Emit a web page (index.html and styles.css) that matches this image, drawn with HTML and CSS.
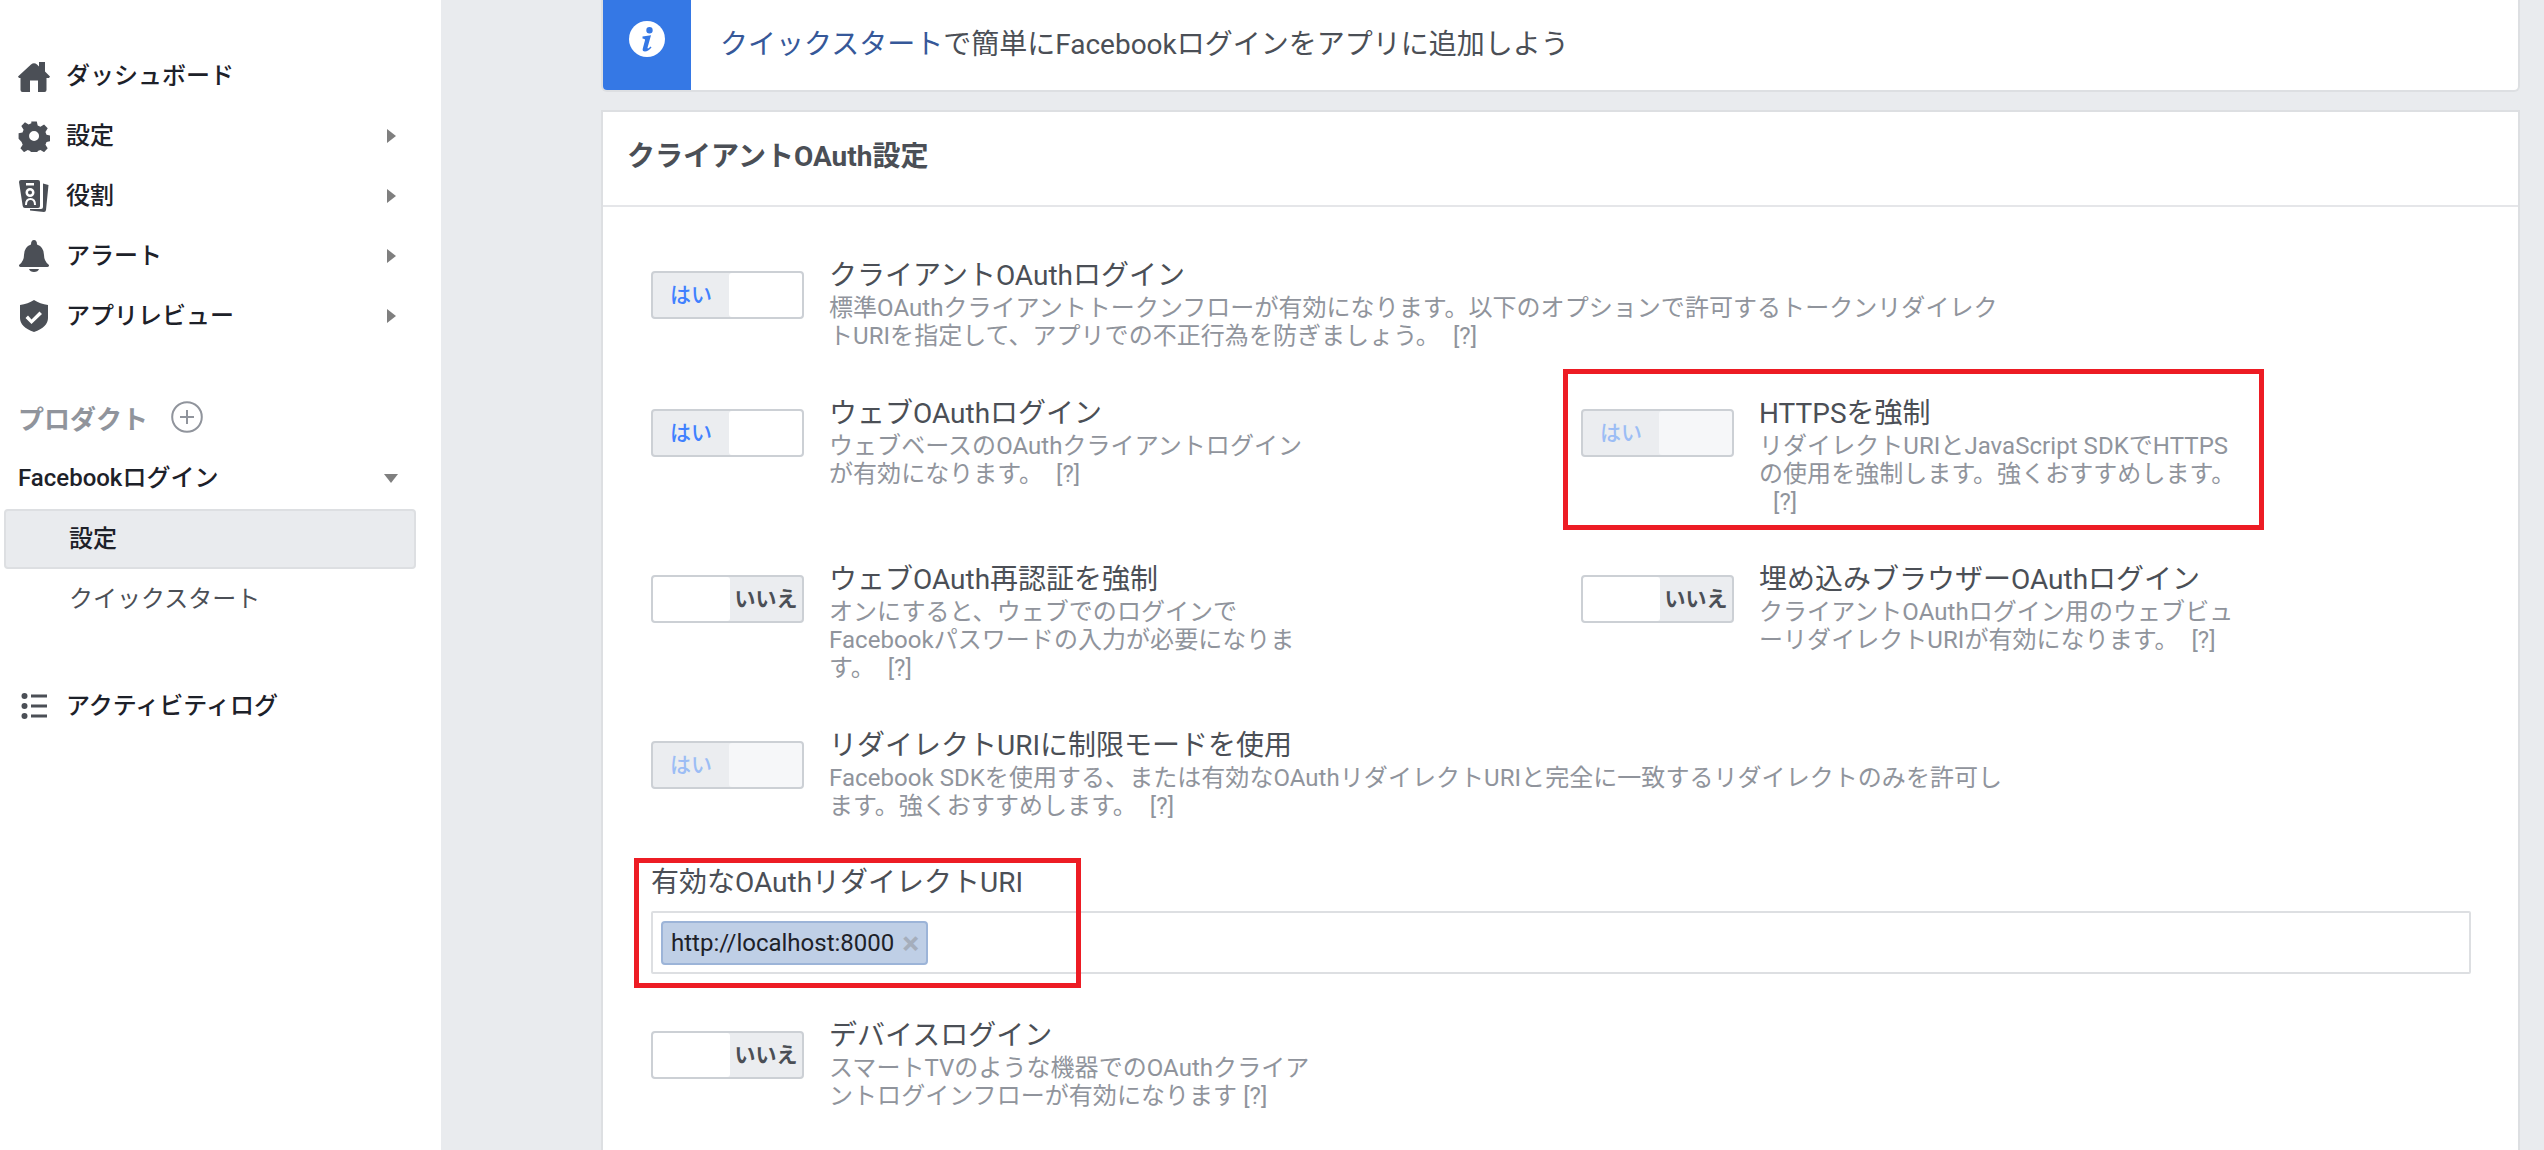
FILE: index.html
```html
<!DOCTYPE html>
<html lang="ja">
<head>
    <meta charset="UTF-8">
    <meta name="viewport" content="width=device-width, initial-scale=1.0">
    <title>クライアントOAuth設定</title>
    <link rel="stylesheet" href="styles.css">
</head>
<body>
    <div class="page">
        <!-- サイドバー -->
        <nav class="sidebar">
            <div class="nav-row">
                <svg class="nav-icon" viewBox="0 0 32 32"><path d="M0 16.500 13 4.500q3-2.500 6 0L21 6.500V2h6v9.500l5 5-1 1.500h-2.500V30q0 2-2 2H20V20.500h-8V32H4.500q-2 0-2-2V18H1z"/></svg>
                <span class="nav-label">ダッシュボード</span>
            </div>
            <div class="nav-row">
                <svg class="nav-icon" viewBox="0 0 32 32"><path fill-rule="evenodd" d="M13 0h6l1 4.500 3 1.300 4-2.500 4 4.200-2.500 4 1.200 3 4.300 1v6l-4.300 1-1.200 3 2.500 4-4 4.200-4-2.500-3 1.300-1 4.500h-6l-1-4.500-3-1.300-4 2.500-4-4.200 2.500-4-1.200-3L-1 19v-6l4.300-1 1.200-3-2.500-4 4-4.200 4 2.500 3-1.300zM16 10.500a5.500 5.500 0 1 0 0 11 5.500 5.500 0 0 0 0-11z" transform="translate(1.500 1.500) scale(.91)"/></svg>
                <span class="nav-label">設定</span>
                <span class="arrow-right"></span>
            </div>
            <div class="nav-row">
                <svg class="nav-icon" viewBox="0 0 32 32"><path fill-rule="evenodd" d="M3 0h17q2 0 2 2v24q0 2-2 2H7q-2 0-2.300-2L1 2q0-2 2-2zM8 3v2.500h8V3zM12 8a4.500 4.500 0 1 0 0 9 4.500 4.500 0 0 0 0-9zm0 2.500a2 2 0 1 1 0 4 2 2 0 0 1 0-4zM7 25h2q0-5 3.500-5t3.500 5h2q0-7-5.500-7T7 25z"/><path d="M25 3.500 30.500 5 28 30q-.2 2-2 2l-14-1.500V29h11q2 0 2-2z"/></svg>
                <span class="nav-label">役割</span>
                <span class="arrow-right"></span>
            </div>
            <div class="nav-row">
                <svg class="nav-icon" viewBox="0 0 32 32"><path d="M13 4.500Q13 0 16 0t3 4.500Q26 7 26 15q0 6 4.500 9.500 1.500 2-1 2.500h-27q-2.500-.5-1-2.500Q6 21 6 15q0-8 7-10.500zM11 29h10q-1 3-5 3t-5-3z"/></svg>
                <span class="nav-label">アラート</span>
                <span class="arrow-right"></span>
            </div>
            <div class="nav-row">
                <svg class="nav-icon" viewBox="0 0 32 32"><path fill-rule="evenodd" d="M16 0q6 4 14 5v13q0 9-14 14Q2 27 2 18V5q8-1 14-5zM10 15.500l-2.500 2.500 6 6L24 14l-2.500-2.500-8 8z"/></svg>
                <span class="nav-label">アプリレビュー</span>
                <span class="arrow-right"></span>
            </div>

            <div class="products-head">
                <span>プロダクト</span>
                <svg class="plus-icon" viewBox="0 0 32 32"><circle cx="16" cy="16" r="14.800"/><path d="M16 9v14M9 16h14"/></svg>
            </div>
            <div class="product-row">
                <span class="product-name">Facebookログイン</span>
                <span class="arrow-down"></span>
            </div>
            <div class="sub-row sub-active">設定</div>
            <div class="sub-row">クイックスタート</div>

            <div class="nav-row nav-activity">
                <svg class="nav-icon" viewBox="0 0 32 32"><circle cx="6.500" cy="6" r="3"/><circle cx="6.500" cy="16" r="3"/><circle cx="6.500" cy="26" r="3"/><path d="M13 4.500h16v3H13zM13 14.500h16v3H13zM13 24.500h16v3H13z"/></svg>
                <span class="nav-label">アクティビティログ</span>
            </div>
        </nav>

        <main class="content">
            <!-- お知らせ -->
            <div class="notice">
                <div class="notice-icon">
                    <svg viewBox="0 0 36 36"><circle cx="18" cy="18" r="18" fill="#fff"/><path fill="#3578e5" d="M20.500 6a3.200 3.200 0 1 1 0 6.400 3.200 3.200 0 0 1 0-6.400zM13.500 15.500l8.500-1.200-3.500 12.500q0 1 1 .5l2.200-1.700.8.900q-3.500 3.800-6.500 4-3 0-2.200-3l2.200-8.200q.2-1.800-2.500-1.800z"/></svg>
                </div>
                <p class="notice-text"><a href="#">クイックスタート</a>で簡単にFacebookログインをアプリに追加しよう</p>
            </div>

            <!-- 設定カード -->
            <section class="card">
                <h2 class="card-title">クライアントOAuth設定</h2>
                <div class="card-body">
                    <div class="option-grid">
                        <div class="option option-wide">
                            <div class="toggle toggle-on"><span class="toggle-side">はい</span><span class="toggle-knob"></span></div>
                            <div class="option-text">
                                <h3>クライアントOAuthログイン</h3>
                                <p>標準OAuthクライアントトークンフローが有効になります。以下のオプションで許可するトークンリダイレク<br>トURIを指定して、アプリでの不正行為を防ぎましょう。 <a class="help">[?]</a></p>
                            </div>
                        </div>
                        <div class="option">
                            <div class="toggle toggle-on"><span class="toggle-side">はい</span><span class="toggle-knob"></span></div>
                            <div class="option-text">
                                <h3>ウェブOAuthログイン</h3>
                                <p>ウェブベースのOAuthクライアントログイン<br>が有効になります。 <a class="help">[?]</a></p>
                            </div>
                        </div>
                        <div class="option">
                            <div class="toggle toggle-on toggle-disabled"><span class="toggle-side">はい</span><span class="toggle-knob"></span></div>
                            <div class="option-text">
                                <h3>HTTPSを強制</h3>
                                <p>リダイレクトURIとJavaScript SDKでHTTPS<br>の使用を強制します。強くおすすめします。<br><a class="help help-indent">[?]</a></p>
                            </div>
                        </div>
                        <div class="option">
                            <div class="toggle toggle-off"><span class="toggle-knob"></span><span class="toggle-side">いいえ</span></div>
                            <div class="option-text">
                                <h3>ウェブOAuth再認証を強制</h3>
                                <p>オンにすると、ウェブでのログインで<br>Facebookパスワードの入力が必要になりま<br>す。 <a class="help">[?]</a></p>
                            </div>
                        </div>
                        <div class="option">
                            <div class="toggle toggle-off"><span class="toggle-knob"></span><span class="toggle-side">いいえ</span></div>
                            <div class="option-text">
                                <h3>埋め込みブラウザーOAuthログイン</h3>
                                <p>クライアントOAuthログイン用のウェブビュ<br>ーリダイレクトURIが有効になります。 <a class="help">[?]</a></p>
                            </div>
                        </div>
                        <div class="option option-wide">
                            <div class="toggle toggle-on toggle-disabled"><span class="toggle-side">はい</span><span class="toggle-knob"></span></div>
                            <div class="option-text">
                                <h3>リダイレクトURIに制限モードを使用</h3>
                                <p>Facebook SDKを使用する、または有効なOAuthリダイレクトURIと完全に一致するリダイレクトのみを許可し<br>ます。強くおすすめします。 <a class="help">[?]</a></p>
                            </div>
                        </div>
                    </div>

                    <div class="uri-field">
                        <label>有効なOAuthリダイレクトURI</label>
                        <div class="tag-input">
                            <span class="tag">http://localhost:8000<b class="tag-x">×</b></span>
                        </div>
                    </div>

                    <div class="option option-wide">
                        <div class="toggle toggle-off"><span class="toggle-knob"></span><span class="toggle-side">いいえ</span></div>
                        <div class="option-text">
                            <h3>デバイスログイン</h3>
                            <p>スマートTVのような機器でのOAuthクライア<br>ントログインフローが有効になります <a class="help help-tight">[?]</a></p>
                        </div>
                    </div>
                </div>

                <!-- 赤枠の注釈 -->
                <div class="mark mark-https"></div>
                <div class="mark mark-uri"></div>
            </section>
        </main>
    </div>
</body>
</html>
```

FILE: styles.css
```css
* {
    box-sizing: border-box;
}
html, body {
    margin: 0;
    height: 100%;
    overflow: hidden;
}
body {
    font-family: Roboto, "Noto Sans CJK JP", sans-serif;
    color: #1d2129;
    background-color: #e9ebee;
}
p, h2, h3 {
    margin: 0;
}
.page {
    display: flex;
    height: 1150px;
}

/* sidebar */
.sidebar {
    width: 441px;
    flex: none;
    background: #fff;
    padding-top: 46px;
}
.nav-row {
    display: flex;
    align-items: center;
    height: 60px;
    padding-left: 18px;
    padding-right: 45px;
}
.nav-icon {
    width: 32px;
    height: 32px;
    fill: #4b4f56;
    flex: none;
}
.nav-label {
    flex: 1;
    margin-left: 16px;
    font-size: 24px;
    font-weight: 500;
    line-height: 30px;
}
.arrow-right {
    width: 0;
    height: 0;
    border-left: 9px solid #7f7f7f;
    border-top: 7px solid transparent;
    border-bottom: 7px solid transparent;
}
.arrow-down {
    width: 0;
    height: 0;
    margin-top: 3px;
    border-top: 9px solid #7f7f7f;
    border-left: 7px solid transparent;
    border-right: 7px solid transparent;
}
.products-head {
    display: flex;
    align-items: center;
    margin-top: 51px;
    padding-left: 18px;
    height: 40px;
    font-size: 26px;
    font-weight: 700;
    color: #90949c;
}
.plus-icon {
    width: 32px;
    height: 32px;
    margin-left: 23px;
    fill: none;
    stroke: #90949c;
    stroke-width: 2;
}
.product-row {
    display: flex;
    align-items: center;
    justify-content: space-between;
    height: 60px;
    margin-top: 10px;
    padding: 0 43px 0 18px;
    font-size: 24px;
    font-weight: 500;
}
.product-name {
    margin-bottom: 3px;
}
.sub-row {
    display: flex;
    align-items: center;
    width: 412px;
    height: 60px;
    margin-left: 4px;
    padding: 0 0 6px 63px;
    font-size: 24px;
    border: 2px solid transparent;
    color: #4b4f56;
}
.sub-active {
    margin-top: 2px;
    font-weight: 500;
    color: #1d2129;
    background-color: #e9ebee;
    border-color: #dddfe2;
    border-radius: 4px;
}
.nav-activity {
    margin-top: 47px;
}

/* main column */
.content {
    flex: 1;
    padding: 0 24px 0 160px;
    min-width: 0;
}
.notice {
    display: flex;
    align-items: center;
    height: 92px;
    background: #fff;
    border: 2px solid #dddfe2;
    border-top: none;
    border-radius: 0 0 6px 6px;
    overflow: hidden;
}
.notice-icon {
    width: 88px;
    height: 100%;
    background-color: #3578e5;
    display: flex;
    align-items: center;
    justify-content: center;
    padding-bottom: 12px;
}
.notice-icon svg {
    width: 36px;
    height: 36px;
}
.notice-text {
    margin-left: 29px;
    font-size: 28px;
    color: #4b4f56;
    margin-bottom: 6px;
}
.notice-text a {
    color: #365899;
    text-decoration: none;
}
.card {
    position: relative;
    margin-top: 18px;
    background: #fff;
    border: 2px solid #dddfe2;
    border-bottom: none;
    height: 1040px;
}
.card-title {
    height: 95px;
    border-bottom: 2px solid #e5e6e9;
    padding: 0 0 0 24px;
    font-size: 28px;
    font-weight: 700;
    line-height: 90px;
    color: #4b4f56;
}
.card-body {
    padding: 51px 47px 0 48px;
}
.option-grid {
    display: grid;
    grid-template-columns: 930px 1fr;
    row-gap: 46px;
}
.option {
    display: flex;
    align-items: flex-start;
}
.option-wide {
    grid-column: 1 / 3;
}
.toggle {
    display: flex;
    flex: none;
    width: 153px;
    height: 48px;
    margin-top: 13px;
    margin-right: 25px;
    background-color: #ebedf0;
    border: 2px solid #ccd0d5;
    border-radius: 4px;
}
.toggle-side {
    width: 76px;
    flex: none;
    font-size: 21px;
    line-height: 44px;
    text-align: center;
}
.toggle-knob {
    flex: 1;
    background: #fff;
    border-radius: 3px;
}
.toggle-on .toggle-side {
    color: #4080ff;
    font-weight: 500;
}
.toggle-off .toggle-side {
    width: 72px;
    color: #4b4f56;
    font-weight: 700;
}
.toggle-disabled .toggle-side {
    color: #9cbdf5;
}
.toggle-disabled .toggle-knob {
    background-color: #f6f7f9;
}
.option-text h3 {
    font-size: 28px;
    font-weight: 400;
    line-height: 35px;
    color: #4b4f56;
}
.option-text p {
    margin-top: 1px;
    font-size: 24px;
    line-height: 28px;
    letter-spacing: 0.05px;
    color: #90949c;
}
.help {
    margin-left: 7px;
}
.help-tight {
    margin-left: 0;
}
.help-indent {
    margin-left: 14px;
}
.uri-field {
    margin: 45px 0 44px;
}
.uri-field label {
    display: block;
    font-size: 28px;
    line-height: 35px;
    color: #4b4f56;
}
.tag-input {
    margin-top: 11px;
    height: 63px;
    padding: 8px 8px;
    border: 2px solid #dddfe2;
    border-radius: 2px;
}
.tag {
    display: inline-block;
    height: 44px;
    padding: 0 7px 0 8px;
    font-size: 24px;
    line-height: 40px;
    color: #1d2129;
    background-color: #bfcfe6;
    border: 2px solid #9cb4d8;
    border-radius: 4px;
}
.tag-x {
    margin-left: 8px;
    color: #a5aebc;
    font-size: 32px;
    line-height: 0;
    vertical-align: -3px;
}

/* red annotation boxes */
.mark {
    position: absolute;
    border: 5px solid #ed1c24;
}
.mark-https {
    left: 960px;
    top: 257px;
    width: 701px;
    height: 161px;
}
.mark-uri {
    left: 31px;
    top: 746px;
    width: 447px;
    height: 130px;
}
```
